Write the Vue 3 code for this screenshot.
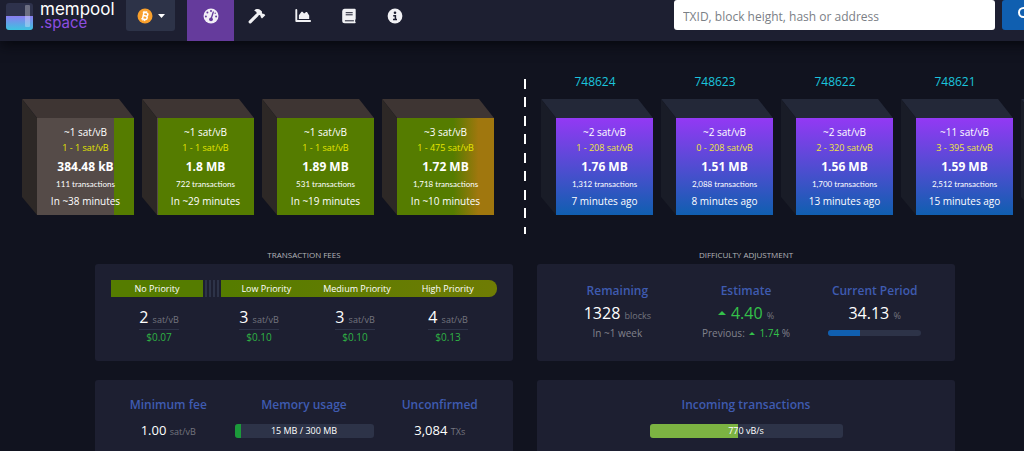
<script setup>
const pending = [
  { fee: '~1 sat/vB', range: '1 - 1 sat/vB', size: '384.48 kB', txs: '111 transactions', time: 'In ~38 minutes', tone: 'partial' },
  { fee: '~1 sat/vB', range: '1 - 1 sat/vB', size: '1.8 MB', txs: '722 transactions', time: 'In ~29 minutes', tone: 'nearly' },
  { fee: '~1 sat/vB', range: '1 - 1 sat/vB', size: '1.89 MB', txs: '531 transactions', time: 'In ~19 minutes', tone: 'full' },
  { fee: '~3 sat/vB', range: '1 - 475 sat/vB', size: '1.72 MB', txs: '1,718 transactions', time: 'In ~10 minutes', tone: 'mixed' },
]
const mined = [
  { height: '748624', fee: '~2 sat/vB', range: '1 - 208 sat/vB', size: '1.76 MB', txs: '1,312 transactions', time: '7 minutes ago' },
  { height: '748623', fee: '~2 sat/vB', range: '0 - 208 sat/vB', size: '1.51 MB', txs: '2,088 transactions', time: '8 minutes ago' },
  { height: '748622', fee: '~2 sat/vB', range: '2 - 320 sat/vB', size: '1.56 MB', txs: '1,700 transactions', time: '13 minutes ago' },
  { height: '748621', fee: '~11 sat/vB', range: '3 - 395 sat/vB', size: '1.59 MB', txs: '2,512 transactions', time: '15 minutes ago' },
  { height: '', fee: '', range: '', size: '', txs: '', time: '' },
]
const fees = [
  { rate: 2, usd: '$0.07' },
  { rate: 3, usd: '$0.10' },
  { rate: 3, usd: '$0.10' },
  { rate: 4, usd: '$0.13' },
]
</script>

<template>
  <div class="page">
    <header class="header">
      <a href="#" class="logo" aria-label="mempool.space">
        <svg class="mark" viewBox="0 0 27 27" aria-hidden="true">
          <defs>
            <linearGradient id="mark-fill" x1="0" y1="0" x2="0" y2="1">
              <stop offset="0" stop-color="#8a7df0" />
              <stop offset="1" stop-color="#3cc4e0" />
            </linearGradient>
          </defs>
          <rect width="27" height="27" rx="3" fill="#2e324c" />
          <path d="M0 13h27v11a3 3 0 0 1-3 3H3a3 3 0 0 1-3-3z" fill="url(#mark-fill)" />
          <rect x="19" y="2" width="5" height="22" rx="1" fill="#fff" opacity=".3" />
        </svg>
        <span class="wordmark">
          <span>mempool</span>
          <span class="space">.space</span>
        </span>
      </a>

      <button class="network" type="button" aria-label="Network">
        <svg width="16" height="16" viewBox="0 0 16 16" aria-hidden="true">
          <circle cx="8" cy="8" r="7.5" fill="#f9a02c" />
          <g transform="rotate(13 8 8)" fill="none" stroke="#fff">
            <path d="M6.2 4.6v6.8M5 4.6h3.8a1.6 1.6 0 0 1 0 3.3H6.4M8.8 7.9a1.75 1.75 0 0 1 0 3.5H5" stroke-width="1.5" />
            <path d="M7 2.9v1.6M8.7 2.9v1.6M7 11.5v1.6M8.7 11.5v1.6" stroke-width="1" />
          </g>
        </svg>
        <svg width="7" height="4" viewBox="0 0 7 4" aria-hidden="true"><path d="M0 0h7L3.500 4z" fill="#fff" /></svg>
      </button>

      <nav class="nav" aria-label="Main">
        <a href="#" class="active" aria-label="Dashboard">
          <svg viewBox="0 0 16 16" aria-hidden="true">
            <circle cx="8" cy="8" r="7.500" fill="#f1eef6" />
            <g fill="#653b9c">
              <circle cx="8" cy="3" r="1" /><circle cx="4.400" cy="4.600" r="1" /><circle cx="2.900" cy="8.500" r="1" />
              <circle cx="13.100" cy="8.500" r="1" /><circle cx="12.200" cy="5.200" r=".7" />
              <circle cx="8" cy="11.300" r="1.900" />
            </g>
            <path d="M8 11.300L10.300 4" stroke="#653b9c" stroke-width="1.300" stroke-linecap="round" />
          </svg>
        </a>
        <a href="#" aria-label="Mining">
          <svg viewBox="0 0 18 16" aria-hidden="true">
            <path d="M2.200 13.900L9 7.100" stroke="#f1f1f4" stroke-width="3.200" stroke-linecap="round" />
            <path d="M6.200 2.400C8 .6 10.800.4 12.600 2.200l1.400 1.400-.1 1.500 1 .9 1-.2 1.400 1.400-3.300 3.300-1.400-1.400.1-1.100-1-.9-1.500.1-1.700-1.700V4z" fill="#f1f1f4" />
          </svg>
        </a>
        <a href="#" aria-label="Graphs">
          <svg viewBox="0 0 16 16" aria-hidden="true">
            <path d="M1.300 2v11h13.900" fill="none" stroke="#f1f1f4" stroke-width="1.900" stroke-linecap="round" stroke-linejoin="round" />
            <path d="M3.900 11V7.300l2.600-3.500h1l1.600 1.700 2-1.500h.9l2.200 3.600V11z" fill="#f1f1f4" />
          </svg>
        </a>
        <a href="#" aria-label="Documentation">
          <svg viewBox="0 0 16 16" aria-hidden="true">
            <path d="M3.500.8h10.200a1 1 0 0 1 1 1v9.100a1 1 0 0 1-.5.8v2.100a.8.8 0 0 1 .5.700.8.800 0 0 1-.8.800H3.700a2.500 2.500 0 0 1-2.500-2.500V3.200A2.400 2.400 0 0 1 3.500.8z" fill="#f1f1f4" />
            <path d="M4.700 4.700h7M4.700 6.800h7M3.900 12.800h9" stroke="#1d1f31" stroke-width="1" />
          </svg>
        </a>
        <a href="#" aria-label="About">
          <svg viewBox="0 0 16 16" aria-hidden="true">
            <circle cx="8" cy="8" r="7.400" fill="#f1f1f4" />
            <circle cx="8" cy="4.700" r="1.300" fill="#1d1f31" />
            <path d="M6.200 7.800h2.200v3.700M6 11.600h4" fill="none" stroke="#1d1f31" stroke-width="1.500" />
          </svg>
        </a>
      </nav>

      <form class="search" @submit.prevent>
        <input type="text" aria-label="Search" placeholder="TXID, block height, hash or address" />
        <button type="submit" aria-label="Search">
          <svg width="14" height="14" viewBox="0 0 14 14" fill="none" stroke="#fff" stroke-width="2" stroke-linecap="round" aria-hidden="true">
            <circle cx="5.500" cy="5.500" r="4.500" /><path d="M9 9l4 4" />
          </svg>
        </button>
      </form>
    </header>

    <main>
      <section class="chain" aria-label="Blocks">
        <div class="blocks pending">
          <div v-for="(b, i) in pending" :key="i" class="cube">
            <div class="face" :class="b.tone">
              <span class="fee">{{ b.fee }}</span>
              <span class="range">{{ b.range }}</span>
              <strong>{{ b.size }}</strong>
              <span class="txs">{{ b.txs }}</span>
              <span class="time">{{ b.time }}</span>
            </div>
          </div>
        </div>
        <div class="divider"></div>
        <div class="blocks mined">
          <div v-for="(b, i) in mined" :key="i" class="block">
            <a href="#" class="height">{{ b.height }}</a>
            <div class="cube">
              <div class="face">
                <span class="fee">{{ b.fee }}</span>
                <span class="range">{{ b.range }}</span>
                <strong>{{ b.size }}</strong>
                <span class="txs">{{ b.txs }}</span>
                <span class="time">{{ b.time }}</span>
              </div>
            </div>
          </div>
        </div>
      </section>

      <div class="dashboard">
        <section>
          <h2>TRANSACTION FEES</h2>
          <div class="card">
            <div class="priorities">
              <span class="none">No Priority</span>
              <span class="stripes"></span>
              <div class="levels">
                <span>Low Priority</span><span>Medium Priority</span><span>High Priority</span>
              </div>
            </div>
            <div class="fees">
              <div v-for="(f, i) in fees" :key="i" class="rate">
                <p>{{ f.rate }} <small>sat/vB</small></p>
                <span class="usd">{{ f.usd }}</span>
              </div>
            </div>
          </div>
        </section>

        <section>
          <h2>DIFFICULTY ADJUSTMENT</h2>
          <div class="card difficulty">
            <div class="stat">
              <h3>Remaining</h3>
              <p class="value">1328 <small>blocks</small></p>
              <p class="note">In ~1 week</p>
            </div>
            <div class="stat">
              <h3>Estimate</h3>
              <p class="value"><span class="up"><i class="caret"></i>4.40</span> <small>%</small></p>
              <p class="note">Previous: <span class="up"><i class="caret little"></i>1.74</span> %</p>
            </div>
            <div class="stat">
              <h3>Current Period</h3>
              <p class="value">34.13 <small>%</small></p>
              <div class="period"><div :style="{ width: '34.13%' }"></div></div>
            </div>
          </div>
        </section>

        <section class="card usage">
          <div class="stat">
            <h3>Minimum fee</h3>
            <p class="amount">1.00 <small>sat/vB</small></p>
          </div>
          <div class="stat">
            <h3>Memory usage</h3>
            <div class="bar memory"><div :style="{ width: '5%' }"></div><span>15 MB / 300 MB</span></div>
          </div>
          <div class="stat">
            <h3>Unconfirmed</h3>
            <p class="amount">3,084 <small>TXs</small></p>
          </div>
        </section>

        <section class="card incoming">
          <div class="stat">
            <h3>Incoming transactions</h3>
            <div class="bar rate-bar"><div :style="{ width: '46%' }"></div><span>770 vB/s</span></div>
          </div>
        </section>
      </div>
    </main>
  </div>
</template>

<style>
html {
  background: #11131f;
  overflow: hidden;
}
</style>

<style scoped>
.page {
  min-width: 1050px;
  color: #fff;
  font-family: "Open Sans", "Noto Sans", sans-serif;
  font-size: 11px;
}
.page * { box-sizing: border-box; }
h2, h3, p { margin: 0; }
a { color: inherit; text-decoration: none; }

.header {
  display: flex;
  align-items: flex-start;
  height: 41px;
  padding: 0 2px 0 6px;
  background: #1d1f31;
  box-shadow: 0 4px 12px #07080f;
}
.logo { display: flex; gap: 7px; width: 120px; }
.mark { width: 27px; height: 27px; margin-top: 3px; }
.wordmark {
  display: flex;
  flex-direction: column;
  font-family: Inter, sans-serif;
  font-size: 17px;
  line-height: 13px;
  padding-top: 3px;
}
.space { color: #8d4ee0; font-size: 15px; }
.network {
  display: flex;
  align-items: center;
  justify-content: center;
  gap: 5px;
  width: 49px;
  height: 31px;
  padding: 0;
  border: 0;
  border-radius: 0 0 3px 3px;
  background: #2d3348;
}
.nav { display: flex; margin-left: 12px; }
.nav a {
  display: flex;
  justify-content: center;
  width: 46px;
  height: 41px;
  padding-top: 8px;
}
.nav svg { height: 16px; }
.nav .active { width: 47px; background: #653b9c; }
.search { display: flex; gap: 7px; margin-left: auto; }
.search input {
  width: 321px;
  height: 30px;
  padding: 2px 9px 0;
  border: 0;
  border-radius: 3px;
  background: #fff;
  font: 12px "Open Sans", "Noto Sans", sans-serif;
}
.search input::placeholder { color: #7b8086; opacity: 1; }
.search button {
  height: 30px;
  padding: 0 16px;
  border: 0;
  border-radius: 3px;
  background: #105fb0;
}

.chain {
  display: grid;
  grid-template-columns: 1fr 2px 1fr;
  padding-top: 32px;
}
.blocks { display: flex; gap: 8px; overflow: hidden; }
.pending { justify-content: flex-end; padding: 26px 30px 0 0; }
.mined { padding-left: 15px; }
.height {
  display: block;
  height: 26px;
  padding-right: 4px;
  line-height: 17px;
  font-size: 12px;
  text-align: center;
  color: #1bc4dc;
}
.cube {
  position: relative;
  flex: none;
  width: 112px;
  padding: 19px 0 0 15px;
}
.pending .cube { align-self: flex-start; }
.cube::before, .cube::after { content: ""; position: absolute; inset: 0; }
.cube::before {
  background: #232838;
  clip-path: polygon(0 0, 97px 0, 112px 19px, 15px 19px);
}
.cube::after {
  background: #191c27;
  clip-path: polygon(0 0, 15px 19px, 15px 100%, 0 98px);
}
.pending .cube::before { background: #3e3533; }
.pending .cube::after { background: #2d2826; }
.face {
  display: flex;
  flex-direction: column;
  align-items: center;
  height: 97px;
  padding-top: 6px;
  background: linear-gradient(#9339f4, #105fb0);
  white-space: nowrap;
}
.partial { background: linear-gradient(90deg, #554b48 79%, #557c00 79%); }
.nearly { background: linear-gradient(90deg, #554b48 1%, #557c00 1%); }
.full { background: #557c00; }
.mixed { background: linear-gradient(90deg, #557c00 58%, #a0770e 84%); }
.fee { font-size: 10px; line-height: 16px; }
.range { font-size: 9px; line-height: 16px; color: #f0e63c; }
.pending .range { color: #e6e600; }
.face strong { font-size: 12px; line-height: 22px; }
.txs { font-family: Lato, sans-serif; font-size: 8px; line-height: 12px; }
.time { font-size: 10px; line-height: 22px; }
.divider {
  height: 155px;
  margin-top: 6px;
  background: repeating-linear-gradient(#fff 0 10px, transparent 10px 18px, #fff 18px 28px, transparent 28px 37px);
}

.dashboard {
  display: grid;
  grid-template-columns: 1fr 1fr;
  column-gap: 24px;
  row-gap: 19px;
  max-width: 860px;
  margin: 15px auto 0;
}
h2 {
  font-size: 8px;
  font-weight: 400;
  line-height: 12px;
  margin-bottom: 3px;
  text-align: center;
  color: #b4b5ba;
}
.card { background: #1d1f31; border-radius: 3px; padding: 16px; min-height: 97px; }
.priorities { display: flex; line-height: 17px; font-size: 9px; text-align: center; }
.none { width: 92px; background: #557c00; }
.stripes {
  width: 18px;
  background: repeating-linear-gradient(90deg, #1d1f31 0 2px, #2d3348 2px 4px);
}
.levels {
  display: flex;
  flex: 1;
  padding-right: 4px;
  border-radius: 0 8px 8px 0;
  background: linear-gradient(90deg, #557c00, #6f7c04);
}
.levels span { flex: 1; }
.fees { display: grid; grid-template-columns: 96fr 104fr 88fr 98fr; justify-items: center; }
.rate { text-align: center; padding-top: 8px; }
.rate p { height: 25px; line-height: 24px; font-size: 16px; border-bottom: 1px solid #2d3348; }
small { color: #74757f; font-size: 9px; line-height: 1; }
.usd { display: block; line-height: 15px; font-size: 10px; color: #2fb344; }

.difficulty, .usage { display: flex; }
.stat { flex: 1; text-align: center; }
h3 { font-size: 12px; font-weight: 600; line-height: 22px; color: #3f5bb0; }
.value { font-size: 16px; line-height: 22px; }
.note { font-size: 10px; line-height: 18px; color: #81828c; }
.up { color: #34c14a; }
.caret {
  display: inline-block;
  margin-right: 5px;
  border: solid transparent;
  border-width: 0 4px 4px;
  border-bottom-color: #34c14a;
  vertical-align: 4px;
}
.little { margin: 0 4px 0 2px; border-width: 0 3px 3px; vertical-align: 2px; }
.period {
  width: 93px;
  height: 6px;
  margin: 6px auto 0;
  border-radius: 3px;
  overflow: hidden;
  background: #2d3348;
}
.period div { height: 100%; background: #105fb0; }
.usage, .incoming { padding: 14px 7px; }
.amount { line-height: 28px; font-size: 13px; }
.bar {
  position: relative;
  height: 14px;
  margin: 8px auto 0;
  border-radius: 3px;
  overflow: hidden;
  background: #2d3348;
  font-size: 9px;
  line-height: 14px;
}
.bar div { height: 100%; background: #1b9a3a; }
.bar span { position: absolute; inset: 0; }
.memory { width: 139px; }
.rate-bar { width: 193px; }
.rate-bar div { background: #7cb342; }
</style>
